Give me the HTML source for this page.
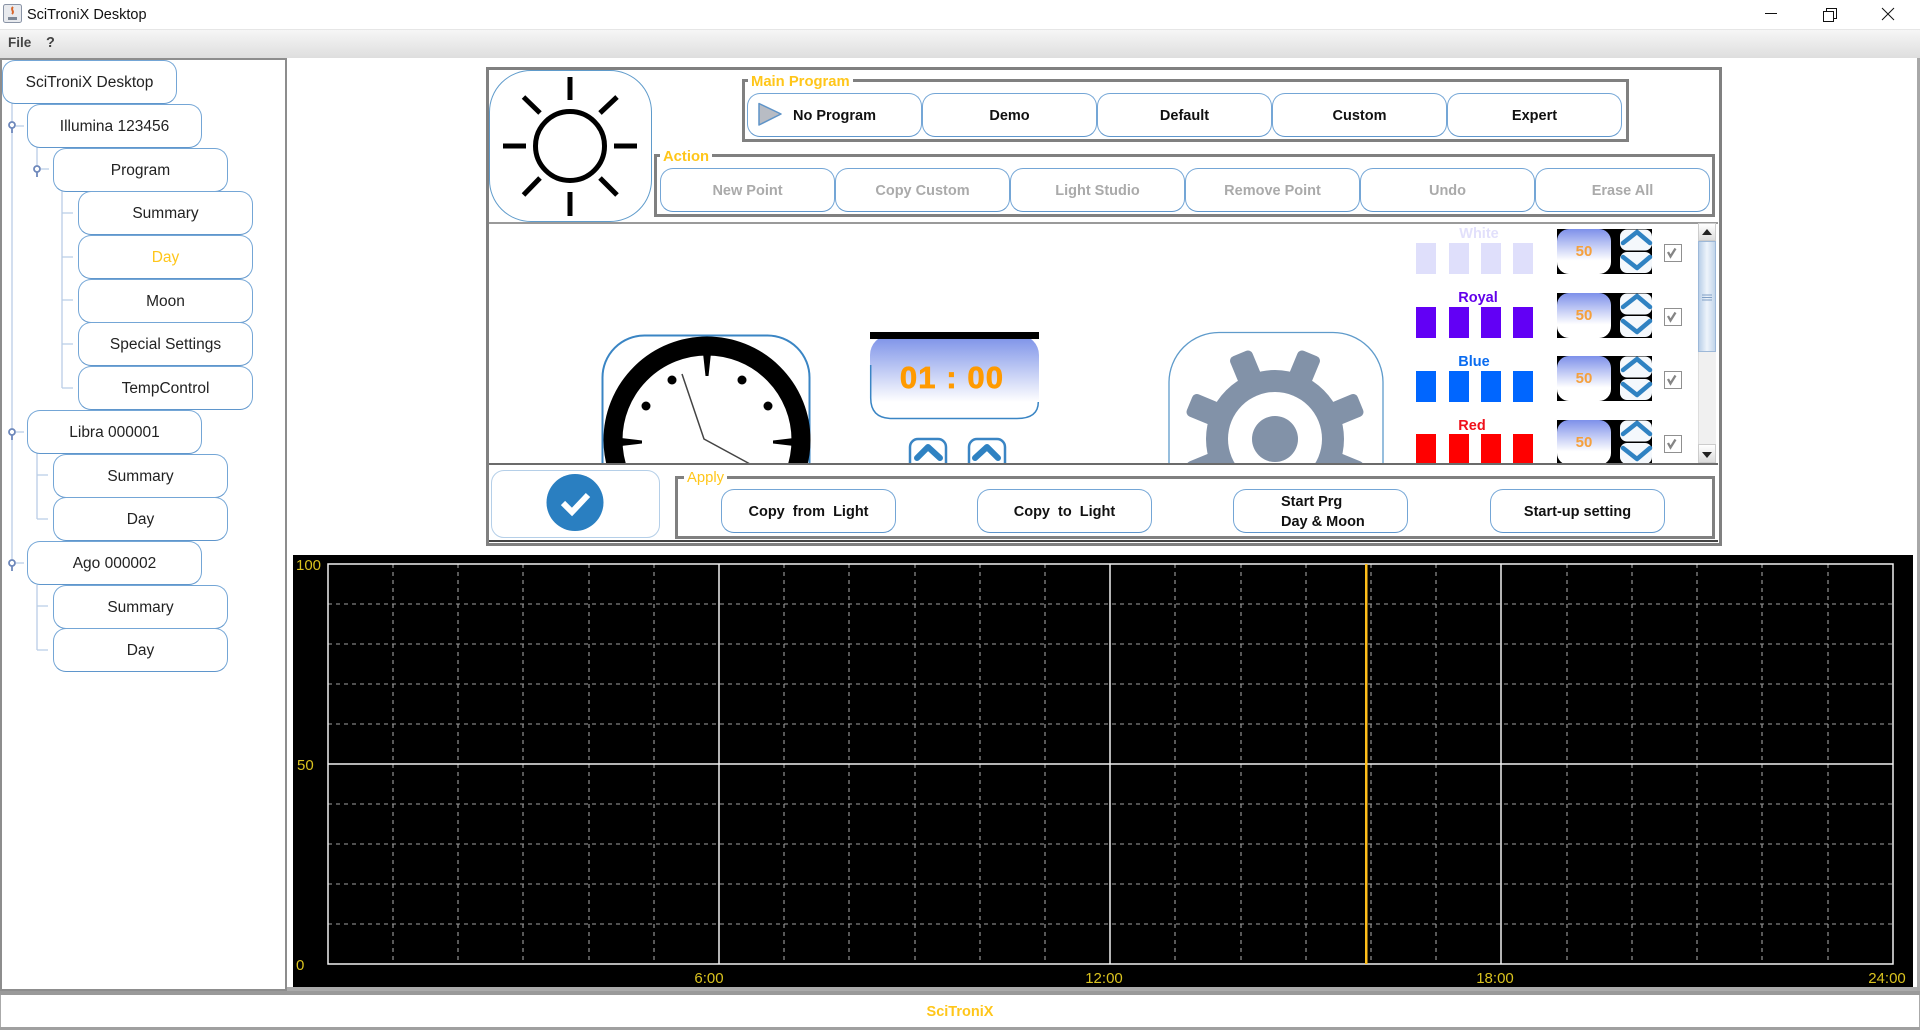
<!DOCTYPE html>
<html><head><meta charset="utf-8"><title>SciTroniX Desktop</title>
<style>
html,body{margin:0;padding:0;background:#fff;}
body{width:1920px;height:1030px;position:relative;overflow:hidden;font-family:"Liberation Sans",sans-serif;}
.a{position:absolute;box-sizing:border-box;}
.n,.b{position:absolute;box-sizing:border-box;display:flex;align-items:center;justify-content:center;background:#fff;border:1.5px solid #74a6d6;border-bottom-color:#5f96cc;white-space:pre;}
.n{width:175px;height:44px;border-radius:13px;font-size:15.5px;color:#222;padding-top:2px;}
.b{width:175px;height:44px;border-radius:13px;font-size:14.5px;font-weight:bold;color:#111;padding-top:1px;}
.g{color:#aaa;}
.t{position:absolute;background:#fff;color:#FFC61A;font-weight:bold;font-size:14.8px;line-height:16px;padding:0 3px;}
.fr{position:absolute;box-sizing:border-box;border:3.5px solid #808080;}
.r{position:absolute;width:20px;height:31px;}
.l{position:absolute;font-weight:bold;font-size:14.5px;line-height:16px;width:80px;text-align:center;}
.sp{position:absolute;left:1557px;width:95px;height:45px;background:#000;}
.sp .f{position:absolute;left:0;top:0;width:54px;height:45px;border-radius:12px;background:linear-gradient(#7d90ea,#fff 70%);color:#F5A03C;font-weight:bold;font-size:15px;display:flex;align-items:center;justify-content:center;}
.cb{position:absolute;left:1663.5px;width:16px;height:16px;border:1.5px solid #909090;background:#fff;}
</style></head>
<body>
<!-- title bar -->
<svg class="a" style="left:3px;top:4px" width="19" height="19"><rect x=".5" y=".5" width="18" height="18" rx="2" fill="#e8eaee" stroke="#8a94a6"/><path d="M5 13h9v3H5z" fill="#7d8796"/><path d="M10 3c-3 3 2 4-1 7" stroke="#d9652a" stroke-width="2" fill="none"/></svg>
<div class="a" style="left:27px;top:6px;font-size:14.5px;line-height:18px;color:#111">SciTroniX Desktop</div>
<svg class="a" style="left:1760px;top:5px" width="150" height="20" fill="none" stroke="#111" stroke-width="1">
<path d="M5 8.500h12"/><path d="M63.500 6.500h10v10h-10zM66.500 6.500v-3h10v10h-3"/><path d="M122 3l12 12M134 3l-12 12"/></svg>
<!-- menu -->
<div class="a" style="left:0;top:29px;width:1920px;height:29px;background:linear-gradient(#f6f6f6,#dedede);border-top:1px solid #e6e6e6"></div>
<div class="a" style="left:8px;top:34px;font-size:13.5px;font-weight:bold;color:#444;line-height:18px">File</div>
<div class="a" style="left:46px;top:34px;font-size:14.5px;font-weight:bold;color:#444;line-height:18px">?</div>
<!-- tree panel -->
<div class="a" style="left:0;top:58px;width:287px;height:933px;border:2.5px solid #8d8d8d;background:#fff"></div>
<svg class="a" style="left:0;top:0" width="288" height="700" fill="none" stroke="#b9cde6" stroke-width="1.300">
<path d="M12 103V563M37 147V169M62 191V388M62 213H73M62 257H73M62 300H73M62 344H73M62 388H73M37 453V519M37 475H48M37 519H48M37 585V650M37 606H48M37 650H48M16 126H24M41 169H49M16 432H24M16 563H24"/>
<g stroke="#6e88bb" stroke-width="1.800"><circle cx="12" cy="125" r="3" fill="#fff"/><path d="M12 128v5"/><circle cx="37" cy="169" r="3" fill="#fff"/><path d="M37 172v5"/><circle cx="12" cy="432" r="3" fill="#fff"/><path d="M12 435v5"/><circle cx="12" cy="563" r="3" fill="#fff"/><path d="M12 566v5"/></g></svg>
<div class="n" style="left:2px;top:60px">SciTroniX Desktop</div>
<div class="n" style="left:27px;top:104px">Illumina 123456</div>
<div class="n" style="left:53px;top:148px">Program</div>
<div class="n" style="left:78px;top:191px">Summary</div>
<div class="n" style="left:78px;top:235px;color:#FFC61A">Day</div>
<div class="n" style="left:78px;top:279px">Moon</div>
<div class="n" style="left:78px;top:322px">Special Settings</div>
<div class="n" style="left:78px;top:366px">TempControl</div>
<div class="n" style="left:27px;top:410px">Libra 000001</div>
<div class="n" style="left:53px;top:454px">Summary</div>
<div class="n" style="left:53px;top:497px">Day</div>
<div class="n" style="left:27px;top:541px">Ago 000002</div>
<div class="n" style="left:53px;top:585px">Summary</div>
<div class="n" style="left:53px;top:628px">Day</div>

<!-- main panel -->
<div class="a" style="left:486px;top:67px;width:1236px;height:479px;border:3.5px solid #808080;background:#fff"></div>
<!-- scroll contents -->
<svg class="a" style="left:0;top:0" width="1920" height="470">
<!-- clock -->
<rect x="602.500" y="335.500" width="207" height="200" rx="42" fill="#fff" stroke="#3a85c4" stroke-width="2"/>
<circle cx="707" cy="440" r="94" fill="#fff" stroke="#000" stroke-width="19"/>
<path d="M703 353h8l-2.500 23h-3zM621 438l21 2.500v3l-21 2.500zM794 438l-21 2.500v3l21 2.500z" fill="#000"/>
<circle cx="672" cy="380" r="4.500"/><circle cx="742" cy="380" r="4.500"/><circle cx="646" cy="406" r="4.500"/><circle cx="768" cy="406" r="4.500"/>
<path d="M682 374L704 439L750 464" fill="none" stroke="#444" stroke-width="1.500"/>
<!-- time -->
<defs><linearGradient id="tg" x1="0" y1="0" x2="0" y2="1"><stop offset="0" stop-color="#7a90e8"/><stop offset=".8" stop-color="#fff"/></linearGradient></defs>
<rect x="870" y="335" width="169" height="84" rx="20" fill="url(#tg)"/>
<path d="M870.700 365V398Q870.700 418.500 892 418.500H1017Q1038.300 418.500 1038.300 402" fill="none" stroke="#3a85c4" stroke-width="1.500"/>
<rect x="870" y="332" width="169" height="7" fill="#000"/>
<text x="952" y="388" text-anchor="middle" font-family="Liberation Sans" font-weight="bold" font-size="31" letter-spacing="1.100" fill="#FF9A00" stroke="#FF9A00" stroke-width=".7">01 : 00</text>
<g fill="#fff" stroke="#3a85c4" stroke-width="2.500"><rect x="910" y="439" width="36" height="34" rx="8"/><rect x="969" y="439" width="36" height="34" rx="8"/></g>
<path d="M917 458L928 447 940 458M975 458L987 447 998 458" fill="none" stroke="#2f82c2" stroke-width="6" stroke-linecap="round" stroke-linejoin="round"/>
<!-- gear -->
<rect x="1169" y="332.500" width="214" height="200" rx="50" fill="#fff" stroke="#5f9bcb" stroke-width="1.300"/>
<g transform="translate(1275,439)" fill="#8292A8">
<circle r="69"/>
<rect x="-12" y="-92.500" width="24" height="36" rx="5" transform="rotate(22.5)"/>
<rect x="-12" y="-92.500" width="24" height="36" rx="5" transform="rotate(-22.5)"/>
<rect x="-12" y="-92.500" width="24" height="36" rx="5" transform="rotate(67.5)"/>
<rect x="-12" y="-92.500" width="24" height="36" rx="5" transform="rotate(-67.5)"/>
<rect x="-12" y="-92.500" width="24" height="36" rx="5" transform="rotate(112.5)"/>
<rect x="-12" y="-92.500" width="24" height="36" rx="5" transform="rotate(-112.5)"/>
<circle r="47" fill="#fff"/><circle r="23"/>
</g>
</svg>
<div class="a" style="left:489px;top:222px;width:1229px;height:2px;background:#9a9a9a"></div>
<!-- colour rows -->
<div class="l" style="left:1439px;top:226px;color:#e2e0fb">White</div>
<div class="l" style="left:1438px;top:290px;color:#6200ea">Royal</div>
<div class="l" style="left:1434px;top:354px;color:#0a6cf0">Blue</div>
<div class="l" style="left:1432px;top:418px;color:#f0101a">Red</div>
<div class="r" style="left:1416px;top:243px;background:#dfdffb"></div><div class="r" style="left:1449px;top:243px;background:#dfdffb"></div><div class="r" style="left:1481px;top:243px;background:#dfdffb"></div><div class="r" style="left:1513px;top:243px;background:#dfdffb"></div>
<div class="r" style="left:1416px;top:307px;background:#6200f5"></div><div class="r" style="left:1449px;top:307px;background:#6200f5"></div><div class="r" style="left:1481px;top:307px;background:#6200f5"></div><div class="r" style="left:1513px;top:307px;background:#6200f5"></div>
<div class="r" style="left:1416px;top:371px;background:#0066ff"></div><div class="r" style="left:1449px;top:371px;background:#0066ff"></div><div class="r" style="left:1481px;top:371px;background:#0066ff"></div><div class="r" style="left:1513px;top:371px;background:#0066ff"></div>
<div class="r" style="left:1416px;top:434px;background:#ff0000"></div><div class="r" style="left:1449px;top:434px;background:#ff0000"></div><div class="r" style="left:1481px;top:434px;background:#ff0000"></div><div class="r" style="left:1513px;top:434px;background:#ff0000"></div>
<!-- spinners -->
<div class="sp" style="top:229px"><div class="f">50</div></div>
<div class="sp" style="top:293px"><div class="f">50</div></div>
<div class="sp" style="top:356px"><div class="f">50</div></div>
<div class="sp" style="top:420px"><div class="f">50</div></div>
<svg class="a" style="left:1615px;top:225px" width="70" height="245">
<defs><g id="ud"><rect x="5" y="4.500" width="32" height="21" rx="7" fill="#f4f8fc"/><rect x="5" y="27" width="32" height="21" rx="7" fill="#f4f8fc"/><path d="M8 18L22 7 35 18M8 32L22 43 35 32" fill="none" stroke="#2f82c2" stroke-width="4.500" stroke-linecap="round" stroke-linejoin="round"/></g></defs>
<use href="#ud"/><use href="#ud" y="64"/><use href="#ud" y="127"/><use href="#ud" y="191"/>
</svg>
<div class="cb" style="top:244px"></div><div class="cb" style="top:308px"></div><div class="cb" style="top:371px"></div><div class="cb" style="top:435px"></div>
<svg class="a" style="left:1660px;top:240px" width="24" height="220" fill="none" stroke="#858585" stroke-width="2.300"><path d="M8 12l2.500 4.500 5-8M8 76l2.500 4.500 5-8M8 139l2.500 4.500 5-8M8 203l2.500 4.500 5-8"/></svg>
<!-- scrollbar -->
<div class="a" style="left:1698px;top:223px;width:18px;height:240px;background:#f0f0f0;border-left:1px solid #ddd"></div>
<div class="a" style="left:1698px;top:223px;width:18px;height:18px;background:linear-gradient(#fff,#dcdcdc);border:1px solid #ccc"></div>
<div class="a" style="left:1698px;top:444px;width:18px;height:19px;background:linear-gradient(#fff,#dcdcdc);border:1px solid #ccc"></div>
<div class="a" style="left:1698px;top:241px;width:18px;height:111px;background:linear-gradient(90deg,#b9cfe8,#eef4fb 50%,#c2d5ea);border:1px solid #9db8d8"></div>
<svg class="a" style="left:1698px;top:223px" width="18" height="240"><path d="M4 12l5-6 5 6z" fill="#222"/><path d="M4 229l5 6 5-6z" fill="#222"/><path d="M4 72h10M4 74.500h10M4 77h10" stroke="#7f9fc6" stroke-width="1"/></svg>

<!-- sun -->
<div class="a" style="left:488.500px;top:70px;width:163px;height:152px;border:1.300px solid #5f9bcb;border-radius:42px;background:#fff"></div>
<svg class="a" style="left:489px;top:70px" width="163" height="152" fill="none" stroke="#000" stroke-width="5">
<circle cx="81" cy="76" r="34.500"/>
<path d="M81 7V30M81 122V146M14 76H37M125 76H148M34.500 27L51 43M128 27L111 43M34.500 125L51 108M128 125L111 108"/></svg>
<!-- main program -->
<div class="fr" style="left:742px;top:79px;width:887px;height:63px"></div>
<div class="t" style="left:748px;top:74px">Main Program</div>
<div class="b" style="left:747px;top:93px">No Program</div>
<div class="b" style="left:922px;top:93px">Demo</div>
<div class="b" style="left:1097px;top:93px">Default</div>
<div class="b" style="left:1272px;top:93px">Custom</div>
<div class="b" style="left:1447px;top:93px">Expert</div>
<svg class="a" style="left:756px;top:101px" width="28" height="26"><path d="M3 2.500L25 13 3 24z" fill="#b8bcc4" stroke="#5f94c8" stroke-width="1.500" stroke-linejoin="round"/></svg>
<!-- action -->
<div class="fr" style="left:654px;top:154px;width:1061px;height:63px"></div>
<div class="t" style="left:660px;top:149px">Action</div>
<div class="b g" style="left:660px;top:168px">New Point</div>
<div class="b g" style="left:835px;top:168px">Copy Custom</div>
<div class="b g" style="left:1010px;top:168px">Light Studio</div>
<div class="b g" style="left:1185px;top:168px">Remove Point</div>
<div class="b g" style="left:1360px;top:168px">Undo</div>
<div class="b g" style="left:1535px;top:168px">Erase All</div>

<!-- bottom of main panel -->
<div class="a" style="left:489px;top:463px;width:1229px;height:79px;background:#fff;border-top:2.500px solid #6b6b6b;border-bottom:2.500px solid #444"></div>
<div class="a" style="left:491px;top:470px;width:169px;height:68px;border:1.300px solid #b5cfe8;border-radius:13px;background:#fff"></div>
<svg class="a" style="left:541px;top:470px" width="70" height="68"><circle cx="34" cy="32.500" r="28.500" fill="#2a7fc1"/><path d="M22 33l9 9 16-17" fill="none" stroke="#fff" stroke-width="6"/></svg>
<div class="fr" style="left:675px;top:476px;width:1040px;height:63px"></div>
<div class="t" style="left:684px;top:470px;padding:0 3px;font-weight:normal">Apply</div>
<div class="b" style="left:721px;top:489px">Copy  from  Light</div>
<div class="b" style="left:977px;top:489px">Copy  to  Light</div>
<div class="b" style="left:1233px;top:489px;display:block;padding:0"><div style="position:absolute;left:47px;top:2px;text-align:left;line-height:20px">Start Prg<br>Day &amp; Moon</div></div>
<div class="b" style="left:1490px;top:489px">Start-up setting</div>

<!-- chart -->
<div class="a" style="left:293px;top:555px;width:1620px;height:432px;background:#000"></div>
<svg class="a" style="left:0;top:0" width="1920" height="1030">
<path fill="none" stroke="#a0a0a0" stroke-width="1.100" stroke-dasharray="4 4" d="M328 604H1893M328 644H1893M328 684H1893M328 724H1893M328 804H1893M328 844H1893M328 884H1893M328 924H1893M393 564V964M458 564V964M523 564V964M589 564V964M654 564V964M784 564V964M849 564V964M915 564V964M980 564V964M1045 564V964M1175 564V964M1241 564V964M1306 564V964M1371 564V964M1436 564V964M1567 564V964M1632 564V964M1697 564V964M1762 564V964M1828 564V964"/>
<path fill="none" stroke="#f0f0f0" stroke-width="1.500" d="M328 564H1893V964H328ZM328 764H1893M719 564V964M1110 564V964M1501 564V964"/>
<rect x="1365" y="564" width="2.500" height="400" fill="#FFBE1A"/>
<g font-family="Liberation Sans" font-size="15" fill="#D9C21F">
<text x="296" y="570">100</text><text x="297" y="770">50</text><text x="296" y="970">0</text>
<text x="709" y="983" text-anchor="middle">6:00</text><text x="1104" y="983" text-anchor="middle">12:00</text><text x="1495" y="983" text-anchor="middle">18:00</text><text x="1887" y="983" text-anchor="middle">24:00</text></g>
</svg>
<div class="a" style="left:287px;top:987px;width:1633px;height:4px;background:#ababab"></div>
<div class="a" style="left:1917px;top:58px;width:3px;height:933px;background:#a8a8a8"></div>
<!-- status -->
<div class="a" style="left:0;top:991px;width:1920px;height:4px;background:#9a9a9a"></div>
<div class="a" style="left:0;top:995px;width:1920px;height:32px;background:#fff;border-left:1.500px solid #aaa;border-right:1.500px solid #aaa;padding-top:2px;display:flex;align-items:center;justify-content:center;color:#FFC61A;font-weight:bold;font-size:14.5px">SciTroniX</div>
<div class="a" style="left:0;top:1027px;width:1920px;height:3px;background:#a0a0a0"></div>
</body></html>
